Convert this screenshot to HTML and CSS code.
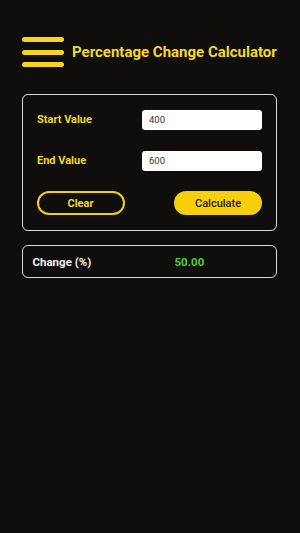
FILE: index.html
```html
<!DOCTYPE html>
<html>
<head>
<meta charset="utf-8">
<link rel="stylesheet" href="styles.css">
</head>
<body>
<div class="app">
  <div class="header">
    <div class="menu"><span></span><span></span><span></span></div>
    <div class="title">Percentage Change Calculator</div>
  </div>
  <div class="card">
    <div class="row">
      <label class="label">Start Value</label>
      <div class="input">400</div>
    </div>
    <div class="row">
      <label class="label">End Value</label>
      <div class="input">600</div>
    </div>
    <div class="buttons">
      <div class="btn btn-clear">Clear</div>
      <div class="btn btn-calc">Calculate</div>
    </div>
  </div>
  <div class="result">
    <div class="result-label">Change (%)</div>
    <div class="result-value">50.00</div>
  </div>
</div>
</body>
</html>
```
FILE: styles.css
```css
html, body {
  margin: 0;
  padding: 0;
  background: #0f0e0d;
  height: 100%;
}
body {
  font-family: Roboto, "Liberation Sans", sans-serif;
}
.app {
  padding: 37px 23px 0 22px;
}
.header {
  display: flex;
  align-items: center;
  gap: 8px;
}
.menu {
  display: flex;
  flex-direction: column;
  gap: 7.5px;
  width: 42px;
  flex-shrink: 0;
}
.menu span {
  display: block;
  height: 5px;
  border-radius: 3px;
  background: #f6d520;
}
.title {
  color: #f5d92a;
  font-weight: 700;
  font-size: 15px;
  white-space: nowrap;
}
.card {
  margin-top: 27px;
  border: 1.5px solid #dcdcdc;
  border-radius: 6px;
  padding: 15px 14px 15px 14px;
  display: flex;
  flex-direction: column;
  gap: 21px;
}
.row {
  display: flex;
  justify-content: space-between;
  align-items: center;
}
.label {
  color: #f3d72c;
  font-weight: 700;
  font-size: 11px;
  margin-top: -1px;
}
.input {
  width: 120px;
  height: 20px;
  box-sizing: border-box;
  background: #fff;
  border-radius: 3px;
  color: #333;
  font-size: 9.5px;
  line-height: 20px;
  padding-left: 7px;
}
.buttons {
  display: flex;
  justify-content: space-between;
  margin-top: -1px;
}
.btn {
  width: 88px;
  height: 24px;
  box-sizing: border-box;
  border-radius: 12px;
  font-weight: 700;
  font-size: 11px;
  display: flex;
  align-items: center;
  justify-content: center;
}
.btn-clear {
  border: 2px solid #f2cf1a;
  color: #f3d72c;
  margin-left: -0.5px;
}
.btn-calc {
  background: #f7cf0c;
  color: #1a1a1a;
  font-weight: 500;
}
.result {
  margin-top: 14px;
  border: 1.5px solid #dcdcdc;
  border-radius: 6px;
  height: 33px;
  box-sizing: border-box;
  display: grid;
  grid-template-columns: 142px auto;
  align-items: center;
  padding-left: 9.5px;
}
.result-label {
  color: #f2f2f2;
  font-weight: 700;
  font-size: 11.5px;
}
.result-value {
  color: #4fcf3a;
  font-weight: 700;
  font-size: 11.5px;
}
```
